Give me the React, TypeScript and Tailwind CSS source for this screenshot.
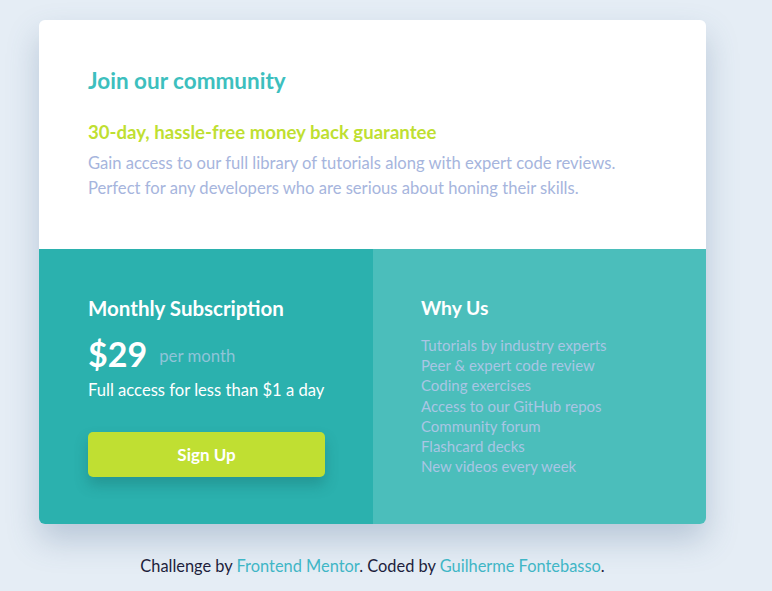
export default function App() {
  const reasons = [
    "Tutorials by industry experts",
    "Peer & expert code review",
    "Coding exercises",
    "Access to our GitHub repos",
    "Community forum",
    "Flashcard decks",
    "New videos every week",
  ];

  return (
    <div
      className="min-h-[591px] bg-[#e5edf5] pl-[39px] pt-5"
      style={{ fontFamily: "Lato, 'Liberation Sans', sans-serif" }}
    >
      <div className="w-[667px] rounded-md shadow-[0_16px_32px_rgba(70,100,140,0.28)]">
        <section className="h-[229px] rounded-t-md bg-white px-[49px] pt-[48px]">
          <h1 className="text-[22.5px] font-bold leading-[26px] text-[#3dbfbe]">Join our community</h1>
          <h2 className="mt-[27px] text-[18.6px] font-bold leading-[22px] text-[#bfdf32]">
            30-day, hassle-free money back guarantee
          </h2>
          <p className="mt-[8px] text-[16.6px] leading-[25px] text-[#a6b5dd]">
            Gain access to our full library of tutorials along with expert code reviews.
            <br />
            Perfect for any developers who are serious about honing their skills.
          </p>
        </section>

        <div className="flex h-[275px]">
          <section className="w-[334px] rounded-bl-md bg-[#2bb1ae] pl-[49px] pt-[46px]">
            <h3 className="text-[20.5px] font-bold leading-[26px] text-white">Monthly Subscription</h3>
            <div className="mt-[13px] flex h-[40px] items-center gap-[12px]">
              <span className="text-[34px] font-bold leading-[40px] text-white">$29</span>
              <span className="mt-[4px] text-[16.8px] text-[#8fc4d8]">per month</span>
            </div>
            <p className="mt-[5px] whitespace-nowrap text-[16.6px] leading-[22px] text-white">
              Full access for less than $1 a day
            </p>
            <button className="mt-[31px] h-[45px] w-[237px] rounded-[5px] bg-[#c0df32] text-[17px] font-bold text-white shadow-[0_8px_14px_rgba(20,90,90,0.3)]">
              Sign Up
            </button>
          </section>

          <section className="flex-1 rounded-br-md bg-[#4bbebb] px-[48px] pt-[46px]">
            <h3 className="text-[19.3px] font-bold leading-[26px] text-white">Why Us</h3>
            <ul className="mt-[14px] text-[15px] leading-[20.2px] text-[#a9c6e4]">
              {reasons.map((r) => (
                <li key={r}>{r}</li>
              ))}
            </ul>
          </section>
        </div>
      </div>

      <footer className="mt-[31px] w-[667px] text-center text-[16.4px] leading-[22px] text-[#1d1e3c]">
        Challenge by <a className="text-[#3fb6c6]">Frontend Mentor</a>. Coded by{" "}
        <a className="text-[#3fb6c6]">Guilherme Fontebasso</a>.
      </footer>
    </div>
  );
}
